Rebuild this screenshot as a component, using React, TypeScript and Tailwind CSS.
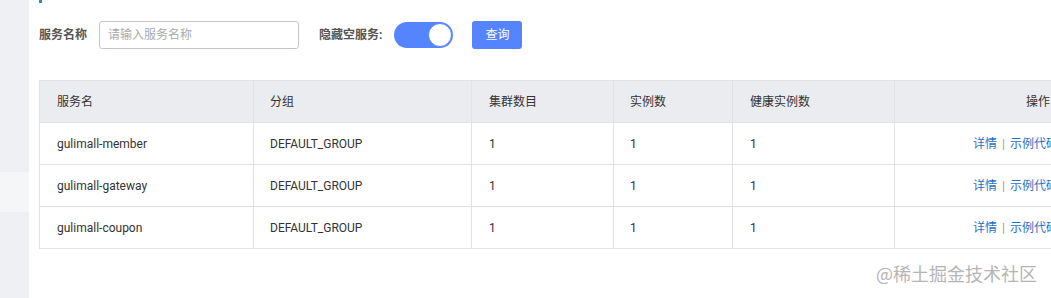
import React from "react";

const rows = ["gulimall-member", "gulimall-gateway", "gulimall-coupon"];

export default function App() {
  return (
    <div
      className="w-[1051px] h-[298px] flex bg-white overflow-hidden relative"
      style={{ fontFamily: 'Roboto, "Noto Sans CJK SC", sans-serif' }}
    >
      <div className="w-[29px] shrink-0 h-full bg-[#eef0f3] flex flex-col">
        <div className="h-[172px]" />
        <div className="h-[40px] bg-[#f5f6f7]" />
      </div>
      <div className="flex-1 pl-[10px] overflow-hidden">
        <div className="w-[3px] h-[3px] bg-[#2a8fb0]" />
        <div className="flex items-center mt-[18px] h-[28px]">
          <span className="text-[12px] font-bold text-[#555] leading-none">服务名称</span>
          <div className="ml-[12px] w-[200px] h-[28px] border border-[#c4c6cf] rounded-[3px] flex items-center pl-[8px] text-[12px] text-[#aaa]">
            请输入服务名称
          </div>
          <span className="ml-[20px] text-[12px] font-bold text-[#555] leading-none">隐藏空服务:</span>
          <div className="ml-[12px] w-[59px] h-[26px] rounded-full bg-[#5584ff] flex items-center justify-end pr-[1px]">
            <div className="w-[24px] h-[24px] rounded-full bg-white border border-[#5584ff]" />
          </div>
          <div className="ml-[19px] w-[50px] h-[28px] rounded-[3px] bg-[#5584ff] text-white text-[12px] flex items-center justify-center">
            查询
          </div>
        </div>
        <table className="mt-[31px] border-collapse table-fixed w-[1100px] text-[12px] text-[#333]">
          <colgroup>
            <col className="w-[214px]" />
            <col className="w-[218px]" />
            <col className="w-[142px]" />
            <col className="w-[119px]" />
            <col className="w-[162px]" />
            <col className="w-[245px]" />
          </colgroup>
          <thead>
            <tr className="h-[42px] bg-[#ebecef]">
              <th className="border border-[#e1e2e5] text-left font-normal pl-[17px]">服务名</th>
              <th className="border border-[#e1e2e5] text-left font-normal pl-[16px]">分组</th>
              <th className="border border-[#e1e2e5] text-left font-normal pl-[17px]">集群数目</th>
              <th className="border border-[#e1e2e5] text-left font-normal pl-[16px]">实例数</th>
              <th className="border border-[#e1e2e5] text-left font-normal pl-[17px]">健康实例数</th>
              <th className="border border-[#e1e2e5] text-left font-normal pl-[131px]">操作</th>
            </tr>
          </thead>
          <tbody>
            {rows.map((r) => (
              <tr key={r} className="h-[42px]">
                <td className="border border-[#e1e2e5] pl-[17px]">{r}</td>
                <td className="border border-[#e1e2e5] pl-[16px]">DEFAULT_GROUP</td>
                <td className="border border-[#e1e2e5] pl-[17px]">1</td>
                <td className="border border-[#e1e2e5] pl-[16px]">1</td>
                <td className="border border-[#e1e2e5] pl-[17px]">1</td>
                <td className="border border-[#e1e2e5] pl-[78px] whitespace-nowrap">
                  <span className="text-[#1f6fc5]">详情</span>
                  <span className="text-[#999] mx-[5px]">|</span>
                  <span className="text-[#1f6fc5]">示例代码</span>
                  <span className="text-[#999] mx-[5px]">|</span>
                  <span className="text-[#1f6fc5]">订阅者</span>
                </td>
              </tr>
            ))}
          </tbody>
        </table>
      </div>
      <div
        className="absolute left-[876px] top-[261px] text-[18px] leading-[24px] text-[#b5b5b5] whitespace-nowrap"
        style={{ fontFamily: '"Noto Sans CJK SC", sans-serif' }}
      >
        @稀土掘金技术社区
      </div>
    </div>
  );
}
